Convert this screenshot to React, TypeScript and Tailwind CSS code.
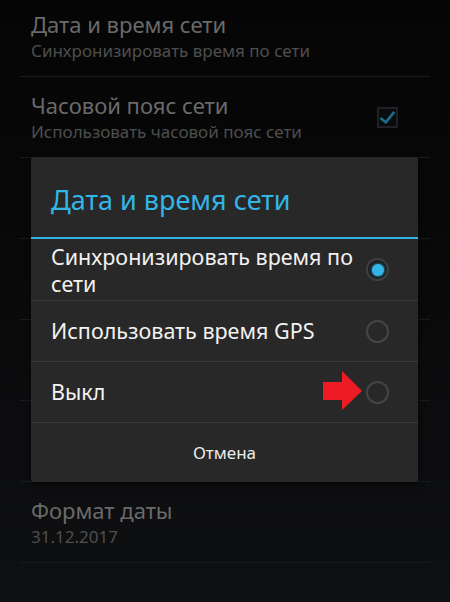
import React from "react";

const font = { fontFamily: "'Noto Sans', Roboto, sans-serif" };

function BgRow({ title, sub, check, first }: { title: string; sub: string; check?: boolean; first?: boolean }) {
  return (
    <div className={`relative flex items-start ${first ? "h-[76px]" : "h-[80px]"} px-[31px]`}>
      <div className={`flex flex-col ${first ? "pt-[10px]" : "pt-[14px]"}`}>
        <div className="text-[22px] leading-[28px] text-[#6a6a6a]">{title}</div>
        <div className="text-[17px] leading-[26px] text-[#4e4e4e]">{sub}</div>
      </div>
      {check && (
        <div className="ml-auto mt-[30px] mr-[21px] w-[21px] h-[21px] border-2 border-[#1f2124] bg-[#0a0b0c] flex items-center justify-center">
          <svg width="20" height="18" viewBox="0 0 20 18">
            <path d="M3 10 L8 14 L17 3" stroke="#1d6a87" strokeWidth="3.2" fill="none" strokeLinecap="square" />
          </svg>
        </div>
      )}
    </div>
  );
}

function Divider() {
  return <div className="mx-[20px] h-px bg-[#1a1b1d]" />;
}

function Radio({ on }: { on?: boolean }) {
  if (on) {
    return (
      <div className="w-[23px] h-[23px] rounded-full bg-[#3d3f41] flex items-center justify-center shrink-0">
        <div className="w-[19px] h-[19px] rounded-full bg-[#1a1c1d] flex items-center justify-center">
          <div className="w-[12px] h-[12px] rounded-full bg-[#33b5e5] shadow-[0_0_3px_#33b5e5]" />
        </div>
      </div>
    );
  }
  return <div className="w-[23px] h-[23px] rounded-full border-2 border-[#454545] shrink-0" />;
}

export default function App() {
  return (
    <div style={font} className="relative w-[450px] h-[602px] overflow-hidden bg-gradient-to-b from-[#050505] to-[#0f1012]">
      <BgRow first title="Дата и время сети" sub="Синхронизировать время по сети" />
      <Divider />
      <BgRow title="Часовой пояс сети" sub="Использовать часовой пояс сети" check />
      <Divider />
      <BgRow title="Установить дату" sub="31.12.2017" />
      <Divider />
      <BgRow title="Установить время" sub="12:00" />
      <Divider />
      <BgRow title="Выбрать часовой пояс" sub="GMT+03:00, Москва" />
      <Divider />
      <BgRow title="24-часовой формат" sub="13:00" />
      <Divider />
      <BgRow title="Формат даты" sub="31.12.2017" />
      <Divider />

      <div className="absolute left-[31px] top-[157px] w-[387px] rounded-[2px] bg-[#282828] shadow-[0_2px_6px_rgba(0,0,0,0.6)] flex flex-col">
        <div className="h-[80px] flex items-center pl-[20px] pt-[6px]">
          <span className="text-[27px] text-[#33b5e5]">Дата и время сети</span>
        </div>
        <div className="h-[2px] bg-[#33b5e5]" />
        <div className="h-[61px] flex items-center pl-[20px] pr-[29px]">
          <div className="w-[312px] text-[21.5px] leading-[27px] text-[#f2f2f2]">Синхронизировать время по сети</div>
          <div className="ml-auto"><Radio on /></div>
        </div>
        <div className="h-px bg-[#3b3b3b]" />
        <div className="h-[60px] flex items-center pl-[20px] pr-[29px]">
          <div className="text-[21.5px] text-[#f2f2f2]">Использовать время GPS</div>
          <div className="ml-auto"><Radio /></div>
        </div>
        <div className="h-px bg-[#3b3b3b]" />
        <div className="relative h-[60px] flex items-center pl-[20px] pr-[29px]">
          <div className="text-[21.5px] text-[#f2f2f2]">Выкл</div>
          <div className="ml-auto"><Radio /></div>
          <svg className="absolute left-[292px] top-[9px]" width="40" height="40" viewBox="0 0 40 40">
            <polygon points="0,11 19,11 19,0 39,20 19,39 19,29 0,29" fill="#ed1c24" />
          </svg>
        </div>
        <div className="h-px bg-[#3b3b3b]" />
        <div className="h-[59px] flex items-center justify-center">
          <span className="text-[17px] text-[#ececec]">Отмена</span>
        </div>
      </div>
    </div>
  );
}
